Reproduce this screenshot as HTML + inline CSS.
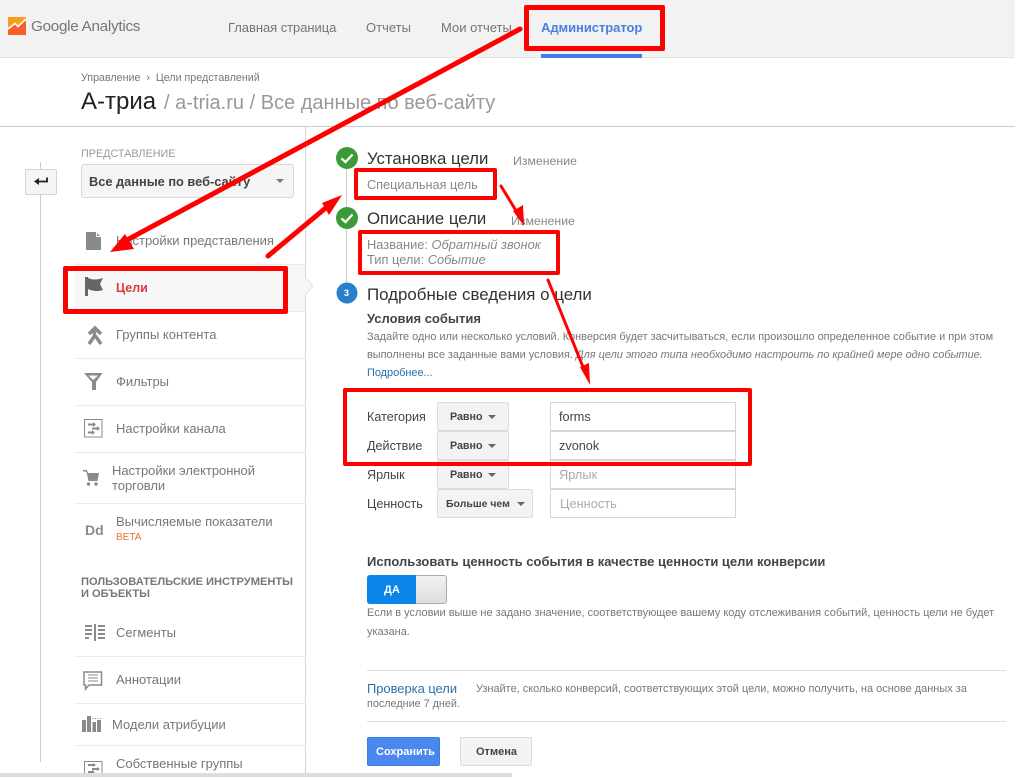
<!DOCTYPE html>
<html><head><meta charset="utf-8"><style>
html,body{margin:0;padding:0;background:#fff}
body{width:1015px;height:777px;position:relative;overflow:hidden;font-family:"Liberation Sans",sans-serif;color:#777}
.t{position:absolute;white-space:nowrap;line-height:16px;font-size:13px}
.a{position:absolute}
.sep{position:absolute;left:75px;width:230px;height:1px;background:#ececec}
.btn{position:absolute;box-sizing:border-box;background:#f3f3f3;border:1px solid #dcdcdc;border-radius:2px;height:29px}
.inp{position:absolute;box-sizing:border-box;left:550px;width:186px;height:29px;background:#fff;border:1px solid #d5d5d5}
.b{font-weight:bold;color:#444;font-size:10.700px}
.car{position:absolute;width:0;height:0;border-left:4px solid transparent;border-right:4px solid transparent;border-top:4px solid #666}
.box{position:absolute;box-sizing:border-box;border:solid #f00;border-radius:2px}
</style></head><body>
<div class="a" style="left:0;top:0;width:1015px;height:57px;background:#f2f2f2;border-bottom:1px solid #e4e4e4"></div>
<svg class="a" style="left:8px;top:17px" width="18" height="18" viewBox="0 0 18 18"><rect width="18" height="18" fill="#fa9d1c"/><path d="M0 18V12L7 7 10 10 18 3V18Z" fill="#f4622a"/><path d="M0 12L7 6.500 10 9.500 18 2" stroke="#fff" stroke-width="1.600" fill="none"/></svg>
<div class="t" style="left:31px;top:19px;font-size:15.200px;color:#757575;letter-spacing:-.25px">Google Analytics</div>
<div class="t" style="left:228px;top:20px;color:#757575;letter-spacing:-.05px">Главная страница</div>
<div class="t" style="left:366px;top:20px;color:#757575">Отчеты</div>
<div class="t" style="left:441px;top:20px;color:#757575">Мои отчеты</div>
<div class="t" style="left:541px;top:20px;color:#4a7fe0;font-weight:bold;letter-spacing:-.05px">Администратор</div>
<div class="a" style="left:541px;top:54px;width:101px;height:4px;background:#3f7fe6"></div>

<div class="t" style="left:81px;top:70px;font-size:10.700px;color:#777">Управление &nbsp;›&nbsp; Цели представлений</div>
<div class="t" style="left:81px;top:88px;font-size:24px;line-height:28px;color:#222">А-триа</div>
<div class="t" style="left:164px;top:90px;font-size:20px;line-height:26px;color:#999">/ a-tria.ru / Все данные по веб-сайту</div>
<div class="a" style="left:0;top:126px;width:1015px;height:1px;background:#ccc"></div>
<div class="a" style="left:305px;top:127px;width:1px;height:650px;background:#d5d5d5"></div>
<div class="a" style="left:40px;top:162px;width:1px;height:600px;background:#ccc"></div>

<div class="a" style="left:25px;top:169px;width:32px;height:26px;box-sizing:border-box;background:#f5f5f5;border:1px solid #d5d5d5;border-radius:2px"></div>
<svg class="a" style="left:33px;top:175px" width="16" height="14" viewBox="0 0 16 14"><path d="M14 2.500V7.500M14 6.500H3" stroke="#222" stroke-width="1.800" fill="none"/><path d="M1 6.500L6 3V10Z" fill="#222"/></svg>

<div class="t" style="left:81px;top:146px;font-size:10.800px;color:#999">ПРЕДСТАВЛЕНИЕ</div>
<div class="a" style="left:81px;top:164px;width:213px;height:34px;box-sizing:border-box;background:#f5f5f5;border:1px solid #d8d8d8;border-radius:3px"></div>
<div class="t" style="left:89px;top:174px;font-weight:bold;font-size:12.800px;color:#444">Все данные по веб-сайту</div>
<div class="car" style="left:276px;top:179px;border-top-color:#777"></div>

<div class="a" style="left:75px;top:264px;width:230px;height:47px;background:#f7f7f7"></div>
<svg class="a" style="left:305px;top:277px" width="10" height="20" viewBox="0 0 10 20"><path d="M0 0L8 9 0 18" fill="#f7f7f7" stroke="#e2e2e2"/></svg>
<div class="sep" style="top:264px"></div><div class="sep" style="top:311px"></div><div class="sep" style="top:358px"></div><div class="sep" style="top:405px"></div><div class="sep" style="top:452px"></div><div class="sep" style="top:503px"></div><div class="sep" style="top:656px"></div><div class="sep" style="top:703px"></div><div class="sep" style="top:745px"></div>

<svg class="a" style="left:0;top:0" width="140" height="777" viewBox="0 0 140 777" fill="#8a8a8a">
<path d="M86 232H96L101 237V250H86Z"/><path d="M96.500 232V236.500H101" stroke="#fff" fill="none"/>
<path d="M85 277H88V296H85ZM88 278C92 280 97 280 103 278L100 284 103 290C97 292 92 291 88 289Z" fill="#666"/>
<path d="M89 334L95 328 101 334" stroke="#8a8a8a" stroke-width="3.500" fill="none"/><path d="M89 344L94.500 336V331M101 344L95.500 336" stroke="#8a8a8a" stroke-width="3.500" fill="none"/>
<path d="M84 373H102.500L96 382V390H92V382ZM88.500 375.500L93.200 380 98 375.500Z" fill-rule="evenodd"/>
<path d="M84.500 419.500H102V437H84.500Z" fill="none" stroke="#8a8a8a"/><path d="M88 423.500H93V422L96 424.500 93 427V425.500H88ZM92 427.500H97V426L100 428.500 97 431V429.500H92ZM88 431.500H92V430L95 432.500 92 435V433.500H88Z"/>
<path d="M83 470H87L88 473H99L97.500 481H88.500L87 474 86 471.500H83Z"/><circle cx="88.500" cy="484" r="1.700"/><circle cx="96" cy="484" r="1.700"/>
<path d="M85 625H92V627H85ZM85 629H92V631H85ZM85 633H92V635H85ZM85 637H89V639H85ZM94 624H96V641H94ZM98 625H105V627H98ZM98 629H105V631H98ZM98 633H105V635H98ZM98 637H105V639H98Z"/>
<path d="M84 672H101.500V685H89L85.500 689V685H84Z" fill="none" stroke="#8a8a8a" stroke-width="1.500"/><path d="M88 674.500H98V675.500H88ZM88 677.500H98V678.500H88ZM88 680.500H98V681.500H88Z"/>
<path d="M82 720H86V732H82ZM87 716H91V732H87ZM92.500 722H96V732H92.500ZM97 720H101V732H97Z"/><path d="M92.500 718h1v1h-1zM95 718h1v1h-1zM97.500 718h1v1h-1zM100 718h1v1h-1z"/>
<path d="M84.500 761.500H102V777H84.500Z" fill="none" stroke="#8a8a8a"/><path d="M88 764H93V763L96 765 93 767V766H88ZM92 768H97V767L100 769 97 771V770H92ZM88 771H92V770L95 772 92 774V773H88Z"/>
</svg>
<div class="t" style="left:85px;top:522px;font-weight:bold;font-size:14px;color:#8a8a8a">Dd</div>

<div class="t" style="left:116px;top:233px;color:#777;letter-spacing:-.03px">Настройки представления</div>
<div class="t" style="left:116px;top:280px;color:#dd3a3a;font-weight:bold;font-size:12.500px">Цели</div>
<div class="t" style="left:116px;top:327px;color:#777">Группы контента</div>
<div class="t" style="left:116px;top:374px;color:#777">Фильтры</div>
<div class="t" style="left:116px;top:421px;color:#777">Настройки канала</div>
<div class="t" style="left:112px;top:463px;color:#777;letter-spacing:-.03px;line-height:15px">Настройки электронной<br>торговли</div>
<div class="t" style="left:116px;top:514px;color:#777;letter-spacing:-.03px">Вычисляемые показатели</div>
<div class="t" style="left:116px;top:532px;color:#e8712a;font-size:10px;line-height:12px">BETA</div>
<div class="t" style="left:81px;top:576px;color:#777;font-weight:bold;font-size:11.100px;line-height:12px">ПОЛЬЗОВАТЕЛЬСКИЕ ИНСТРУМЕНТЫ<br>И ОБЪЕКТЫ</div>
<div class="t" style="left:116px;top:625px;color:#777">Сегменты</div>
<div class="t" style="left:116px;top:672px;color:#777">Аннотации</div>
<div class="t" style="left:112px;top:717px;color:#777">Модели атрибуции</div>
<div class="t" style="left:116px;top:756px;color:#777">Собственные группы</div>

<div class="a" style="left:346px;top:158px;width:1px;height:135px;background:#ccc"></div>
<svg class="a" style="left:335px;top:146px" width="24" height="160" viewBox="0 0 24 160"><circle cx="12" cy="12" r="11" fill="#3c9b38"/><path d="M6.500 12.500L10.500 16 17.500 8.500" stroke="#fff" stroke-width="2.300" fill="none"/><circle cx="12" cy="72" r="11" fill="#3c9b38"/><path d="M6.500 72.500L10.500 76 17.500 68.500" stroke="#fff" stroke-width="2.300" fill="none"/><circle cx="12" cy="147" r="10.500" fill="#2a7fcc"/></svg>
<div class="t" style="left:344px;top:286px;width:6px;color:#fff;font-size:9px;font-weight:bold;line-height:14px">3</div>

<div class="t" style="left:367px;top:149px;font-size:16.800px;line-height:20px;color:#333">Установка цели</div>
<div class="t" style="left:513px;top:153px;font-size:12.300px;color:#888">Изменение</div>
<div class="t" style="left:367px;top:177px;font-size:12.700px;color:#888">Специальная цель</div>
<div class="t" style="left:367px;top:209px;font-size:16.800px;line-height:20px;color:#333">Описание цели</div>
<div class="t" style="left:511px;top:213px;font-size:12.300px;color:#888">Изменение</div>
<div class="t" style="left:367px;top:237px;font-size:12.850px;color:#888">Название: <i>Обратный звонок</i></div>
<div class="t" style="left:367px;top:252px;font-size:12.850px;color:#888">Тип цели: <i>Событие</i></div>
<div class="t" style="left:367px;top:285px;font-size:16.900px;line-height:20px;color:#333">Подробные сведения о цели</div>
<div class="t" style="left:367px;top:311px;font-size:13px;font-weight:bold;color:#444">Условия события</div>
<div class="t" style="left:367px;top:329px;font-size:10.920px;color:#777">Задайте одно или несколько условий. Конверсия будет засчитываться, если произошло определенное событие и при этом</div>
<div class="t" style="left:367px;top:347px;font-size:10.920px;color:#777">выполнены все заданные вами условия. <i>Для цели этого типа необходимо настроить по крайней мере одно событие.</i></div>
<div class="t" style="left:367px;top:365px;font-size:10.920px;color:#2a6fa8">Подробнее...</div>

<div class="t" style="left:367px;top:409px;font-size:12.600px;color:#444">Категория</div>
<div class="t" style="left:367px;top:438px;font-size:12.600px;color:#444">Действие</div>
<div class="t" style="left:367px;top:467px;font-size:12.600px;color:#444">Ярлык</div>
<div class="t" style="left:367px;top:496px;font-size:12.600px;color:#444">Ценность</div>

<div class="btn" style="left:437px;top:402px;width:72px"></div><div class="t b" style="left:450px;top:409px">Равно</div><div class="car" style="left:488px;top:415px"></div>
<div class="btn" style="left:437px;top:431px;width:72px"></div><div class="t b" style="left:450px;top:438px">Равно</div><div class="car" style="left:488px;top:444px"></div>
<div class="btn" style="left:437px;top:460px;width:72px"></div><div class="t b" style="left:450px;top:467px">Равно</div><div class="car" style="left:488px;top:473px"></div>
<div class="btn" style="left:437px;top:489px;width:96px"></div><div class="t b" style="left:446px;top:496px;font-size:10.500px">Больше чем</div><div class="car" style="left:517px;top:502px"></div>

<div class="inp" style="top:402px"></div><div class="t" style="left:559px;top:409px;font-size:12.700px;color:#444">forms</div>
<div class="inp" style="top:431px"></div><div class="t" style="left:559px;top:438px;font-size:12.700px;color:#444">zvonok</div>
<div class="inp" style="top:460px"></div><div class="t" style="left:559px;top:467px;font-size:12.800px;color:#aaa">Ярлык</div>
<div class="inp" style="top:489px"></div><div class="t" style="left:560px;top:496px;font-size:12.800px;color:#aaa">Ценность</div>

<div class="t" style="left:367px;top:554px;font-size:13px;font-weight:bold;color:#444">Использовать ценность события в качестве ценности цели конверсии</div>
<div class="a" style="left:367px;top:575px;width:80px;height:29px;box-sizing:border-box;border:1px solid #aaa;border-radius:3px;background:linear-gradient(#f2f2f2,#ddd)"></div>
<div class="a" style="left:367px;top:575px;width:49px;height:29px;background:#0a84e8;border-radius:3px 0 0 3px"></div>
<div class="t" style="left:384px;top:582px;font-size:11px;font-weight:bold;color:#fff">ДА</div>
<div class="t" style="left:367px;top:605px;font-size:10.980px;color:#777">Если в условии выше не задано значение, соответствующее вашему коду отслеживания событий, ценность цели не будет</div>
<div class="t" style="left:367px;top:624px;font-size:10.980px;color:#777">указана.</div>
<div class="a" style="left:367px;top:670px;width:639px;height:1px;background:#ddd"></div>
<div class="t" style="left:367px;top:681px;font-size:12.900px;color:#2a6fa8">Проверка цели</div>
<div class="t" style="left:476px;top:681px;font-size:10.980px;color:#777">Узнайте, сколько конверсий, соответствующих этой цели, можно получить, на основе данных за</div>
<div class="t" style="left:367px;top:696px;font-size:10.800px;color:#777">последние 7 дней.</div>
<div class="a" style="left:367px;top:721px;width:639px;height:1px;background:#ddd"></div>
<div class="a" style="left:367px;top:737px;width:73px;height:29px;background:#4a87ee;border:1px solid #3f7be0;box-sizing:border-box;border-radius:2px"></div>
<div class="t" style="left:376px;top:744px;font-size:11px;font-weight:bold;color:#fff">Сохранить</div>
<div class="a" style="left:460px;top:737px;width:72px;height:29px;background:#f3f3f3;border:1px solid #dcdcdc;box-sizing:border-box;border-radius:2px"></div>
<div class="t" style="left:476px;top:744px;font-size:11px;font-weight:bold;color:#444">Отмена</div>
<div class="a" style="left:0;top:773px;width:512px;height:4px;background:#ddd"></div>

<div class="box" style="left:524px;top:5px;width:141px;height:46px;border-width:5px"></div>
<div class="box" style="left:63px;top:266px;width:225px;height:48px;border-width:5px"></div>
<div class="box" style="left:354px;top:168px;width:143px;height:32px;border-width:4px"></div>
<div class="box" style="left:358px;top:230px;width:202px;height:45px;border-width:4px"></div>
<div class="box" style="left:343px;top:388px;width:409px;height:78px;border-width:4px"></div>
<svg class="a" style="left:0;top:0" width="1015" height="777" viewBox="0 0 1015 777">
<path d="M520 29L125 241" stroke="#f00" stroke-width="5" stroke-linecap="round"/><path d="M110 252L125 234 134 249Z" fill="#f00"/>
<path d="M268 256L328 206" stroke="#f00" stroke-width="5" stroke-linecap="round"/><path d="M342 195L322 203 329 215Z" fill="#f00"/>
<path d="M501 186L518 214" stroke="#f00" stroke-width="3" stroke-linecap="round"/><path d="M524 226L513 211 523 205Z" fill="#f00"/>
<path d="M548 280L585 372" stroke="#f00" stroke-width="3" stroke-linecap="round"/><path d="M590 385L580 367 589 363Z" fill="#f00"/>
</svg>
</body></html>
